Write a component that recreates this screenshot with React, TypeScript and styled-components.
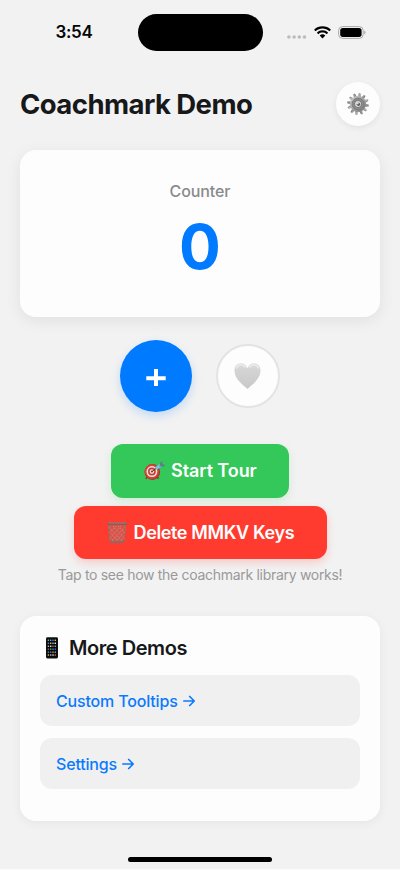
import React, { useState } from "react";
import styled, { createGlobalStyle } from "styled-components";

const GlobalStyle = createGlobalStyle`
  * { box-sizing: border-box; }
  body {
    margin: 0;
    background: #f2f2f2;
    font-family: Inter, "Liberation Sans", sans-serif;
    -webkit-font-smoothing: antialiased;
  }
  button { font-family: inherit; border: 0; padding: 0; cursor: pointer; }
  svg { display: block; flex: none; }
`;

const Screen = styled.div`
  width: 400px;
  height: 870px;
  overflow: hidden;
  display: flex;
  flex-direction: column;
  background: #f2f2f2;
  border-bottom: 1px solid #fbfbfb;
`;

const StatusBar = styled.div`
  height: 82px;
  flex: none;
  display: grid;
  grid-template-columns: 137.5px 125px 137.5px;
  align-items: start;
  padding-top: 14px;
`;

const Clock = styled.time`
  height: 37px;
  padding-left: 55.5px;
  font-size: 17px;
  font-weight: 600;
  line-height: 37px;
  letter-spacing: -0.35px;
  white-space: nowrap;
  color: #050505;
`;

const Island = styled.div`
  height: 36.5px;
  border-radius: 19px;
  background: #000;
`;

const StatusIcons = styled.div`
  height: 37px;
  display: flex;
  align-items: center;
  gap: 7px;
  padding-left: 24px;
`;

const Content = styled.main`
  display: flex;
  flex-direction: column;
  align-items: center;
  padding: 0 20px;
`;

const Header = styled.header`
  width: 100%;
  height: 44px;
  display: flex;
  align-items: center;
  justify-content: space-between;
`;

const Title = styled.h1`
  margin: 0;
  font-size: 27.5px;
  font-weight: 700;
  line-height: 34px;
  letter-spacing: -0.56px;
  white-space: nowrap;
  color: #17181a;
`;

const RoundButton = styled.button<{ $size: number; $tone: "plain" | "outline" | "primary" }>`
  width: ${(p) => p.$size}px;
  height: ${(p) => p.$size}px;
  flex: none;
  display: flex;
  align-items: center;
  justify-content: center;
  border-radius: 50%;
  color: #fff;
  background: ${(p) => (p.$tone === "primary" ? "#007aff" : "#fdfdfd")};
  border: ${(p) => (p.$tone === "outline" ? "2px solid #e3e3e4" : "0")};
  box-shadow: ${(p) =>
    p.$tone === "primary"
      ? "0 4px 10px rgba(0, 122, 255, 0.2)"
      : p.$tone === "plain"
        ? "0 2px 6px rgba(0, 0, 0, 0.07)"
        : "none"};
`;

const CounterCard = styled.section`
  width: 100%;
  height: 166.5px;
  margin-top: 24px;
  padding-top: 31px;
  display: flex;
  flex-direction: column;
  align-items: center;
  border-radius: 16px;
  background: #fdfdfd;
  box-shadow: 0 4px 16px rgba(0, 0, 0, 0.075);
`;

const CounterLabel = styled.div`
  font-size: 16px;
  font-weight: 500;
  line-height: 20px;
  letter-spacing: -0.1px;
  color: #8a8a8b;
`;

const CounterValue = styled.div`
  margin-top: 8px;
  font-size: 62px;
  font-weight: 700;
  line-height: 76px;
  color: #007aff;
`;

const Actions = styled.div`
  display: flex;
  align-items: center;
  gap: 24px;
  height: 72px;
  margin-top: 23.5px;
`;

const WideButton = styled.button<{ $width: number; $color: string; $shadow: string; $top: number; $tracking: number }>`
  width: ${(p) => p.$width}px;
  height: 53.5px;
  margin-top: ${(p) => p.$top}px;
  padding: 1px 0 0 32px;
  display: flex;
  align-items: center;
  gap: 6px;
  border-radius: 12px;
  background: ${(p) => p.$color};
  box-shadow: 0 4px 8px ${(p) => p.$shadow};
  font-size: 18px;
  font-weight: 600;
  line-height: 22px;
  letter-spacing: ${(p) => p.$tracking}px;
  white-space: nowrap;
  color: #fff;
`;

const Hint = styled.p`
  margin: 6px 0 0;
  font-size: 14px;
  line-height: 20px;
  letter-spacing: -0.3px;
  white-space: nowrap;
  color: #99999a;
`;

const DemosCard = styled.section`
  width: 100%;
  height: 205.5px;
  margin-top: 30.5px;
  padding: 20px;
  border-radius: 16px;
  background: #fdfdfd;
  box-shadow: 0 2px 12px rgba(0, 0, 0, 0.055);
`;

const DemosTitle = styled.h2`
  margin: 0 0 15.5px;
  height: 24px;
  display: flex;
  align-items: center;
  gap: 5px;
  padding-left: 4px;
  font-size: 20px;
  font-weight: 600;
  line-height: 24px;
  letter-spacing: -0.45px;
  color: #17181a;
`;

const DemoLink = styled.a`
  height: 51px;
  margin-bottom: 12px;
  padding: 0 16px;
  display: flex;
  align-items: center;
  gap: 5px;
  border-radius: 12px;
  background: #f0f0f0;
  font-size: 16px;
  font-weight: 550;
  letter-spacing: -0.17px;
  color: #0a7aff;
`;

const HomeIndicator = styled.div`
  width: 144px;
  height: 5px;
  flex: none;
  margin: 35.5px auto 0;
  border-radius: 3px;
  background: #000;
`;

const CellularDots = () => (
  <svg width="20" height="12" viewBox="0 0 20 12">
    {[1.9, 7.1, 12.3, 17.5].map((x) => (
      <circle key={x} cx={x} cy="10" r="1.8" fill="#bcbcbc" />
    ))}
  </svg>
);

const WifiIcon = () => (
  <svg width="17" height="13" viewBox="0 0 17 13">
    <path d="M8.5.3C5.3.3 2.4 1.5.3 3.500c-.2.2-.2.4 0 .6l1 1c.2.2.4.2.6 0C3.600 3.500 5.900 2.600 8.500 2.600s4.900.9 6.600 2.500c.2.2.4.2.6 0l1-1c.2-.2.2-.4 0-.6C14.600 1.500 11.700.3 8.500.3Z" />
    <path d="M8.500 4.300c-2.100 0-4 .8-5.400 2.100-.2.2-.2.4 0 .6l1 1c.2.2.4.2.6 0 1-.9 2.300-1.400 3.800-1.400s2.800.5 3.800 1.400c.2.2.4.2.6 0l1-1c.2-.2.2-.4 0-.6-1.400-1.300-3.300-2.100-5.400-2.100Z" />
    <path d="M8.500 8.300c-1 0-1.900.3-2.600.9-.2.200-.2.400 0 .6l2.300 2.400c.2.2.4.2.6 0l2.300-2.400c.2-.2.2-.4 0-.6-.7-.6-1.600-.9-2.600-.9Z" />
  </svg>
);

const BatteryIcon = () => (
  <svg width="28" height="13" viewBox="0 0 28 13">
    <rect x=".6" y=".6" width="24.600" height="11.800" rx="4" fill="none" stroke="#a9a9a9" />
    <rect x="2.200" y="2.100" width="21.400" height="8.800" rx="2.600" />
    <path d="M26.300 4.500c1.600.7 1.600 3.300 0 4Z" fill="#a0a0a0" />
  </svg>
);

const GearIcon = () => (
  <svg width="24" height="24" viewBox="-12 -12 24 24">
    <defs>
      <linearGradient id="gearRim" x1="0" y1="0" x2="1" y2="1">
        <stop offset="0" stopColor="#d2d2d2" />
        <stop offset=".5" stopColor="#a2a2a2" />
        <stop offset="1" stopColor="#777" />
      </linearGradient>
    </defs>
    {Array.from({ length: 12 }, (_, i) => (
      <g key={i} transform={`rotate(${i * 30 + 8})`}>
        <path d="M-1.400-7 L-1-10.600 Q0-11.400 1-10.600 L1.400-7Z" fill={i % 2 ? "#999" : "#b5b5b5"} />
        <path d="M.5-10.800 L1.400-7" stroke="#666" strokeWidth=".5" />
      </g>
    ))}
    <circle r="8" fill="url(#gearRim)" />
    <circle r="5.900" fill="#8b8b8b" stroke="#757575" strokeWidth=".8" />
    <circle r="3.500" fill="#e2e2e2" stroke="#666" strokeWidth=".8" />
    <circle r="1.700" cx=".4" cy=".3" fill="#4c565f" />
    <circle r=".9" cx="-.2" cy="-.5" fill="#c8e0ee" />
  </svg>
);

const PlusIcon = () => (
  <svg width="20" height="20" viewBox="0 0 20 20">
    <path d="M10 3v18M.3 12.200h19.400" stroke="#fff" strokeWidth="4" />
  </svg>
);

const HeartIcon = () => (
  <svg width="28" height="28" viewBox="0 0 28 28">
    <defs>
      <linearGradient id="heartFill" x1="0" y1="0" x2="0" y2="1">
        <stop offset="0" stopColor="#dfdfdf" />
        <stop offset=".25" stopColor="#d4d4d4" />
        <stop offset="1" stopColor="#c8c8c8" />
      </linearGradient>
    </defs>
    <path d="M13.500 27C10 23.500.500 17.500.500 8.500.500 4.200 3.300 1.200 6.800 1.200c3 0 5.500 1.900 6.700 5 1.200-3.100 3.700-5 6.700-5 3.500 0 6.300 3 6.300 7.300 0 9-9.500 15-13 18.500Z" fill="url(#heartFill)" />
    <path d="M2.500 6.500C3.500 2.300 9 1.500 11.500 5.500M15.500 5.500c2.500-4 8-3.200 9 1" fill="none" stroke="#ededed" strokeWidth="1.300" />
  </svg>
);

const TargetIcon = () => (
  <svg width="22" height="20" viewBox="-1 0 22 20">
    <path d="m3.500 15-1.500 3M13 15.500l1.500 2.300" stroke="#a83228" strokeWidth="1.600" />
    <ellipse cx="8.300" cy="11" rx="7.800" ry="7.900" fill="#9d352e" />
    <ellipse cx="7.900" cy="10.600" rx="7.200" ry="7.300" fill="#dc4338" />
    <ellipse cx="7.900" cy="10.600" rx="5.400" ry="5.500" fill="#efe6df" />
    <ellipse cx="7.900" cy="10.600" rx="3.900" ry="4" fill="#c63a32" />
    <ellipse cx="7.900" cy="10.600" rx="2.300" ry="2.400" fill="#f0dfd7" />
    <circle cx="7.900" cy="10.600" r="1" fill="#b22c25" />
    <path d="m8 10.500 4.500-3.300" stroke="#423f40" strokeWidth="1" />
    <path d="m12 7.500 5-3.400" stroke="#79c3e5" strokeWidth="3" />
    <path d="m15.500 5.200.8-3.700 2-1 .1 2.600 2.600 1-1.400 1.600Z" fill="#607e85" />
  </svg>
);

const TrashIcon = () => (
  <svg width="22" height="22" viewBox="0 0 22 22">
    <path d="M2.500 3 4 19q7 2 14 0L19.500 3Z" fill="#b5675e" fillOpacity=".5" />
    <path d="m3 5 13 14M3.500 10l9 9.500M4 15l4 4.500M7 4l11 12M12 4l6.500 7M19 5 6 19M18.500 10l-9 9.500M18 15l-4 4.500M15 4 4 16M10 4l-6.500 7" stroke="#c99b90" strokeWidth=".65" strokeDasharray="1.500 1" />
    <path d="M2.600 3 4 19M19.400 3 18 19" stroke="#8b7771" strokeWidth="1" />
    <path d="M4 18.500q7 1.300 14 0v1.800q-7 1.500-14 0Z" fill="#77736f" />
    <rect x="1.200" y=".8" width="19.600" height="2" rx=".8" fill="#696561" />
    <path d="M2 1.100h18" stroke="#a3a09c" strokeWidth=".6" />
  </svg>
);

const appColors = ["#51d26b", "#e9e9e9", "#f5b83c", "#3ba9f5", "#e35b42", "#b8bec4", "#4b83df"];

const PhoneIcon = () => (
  <svg width="20" height="22" viewBox="0 0 20 22">
    <rect x="2" y=".3" width="12" height="21.200" rx="1.400" fill="#111" />
    <rect x="3.200" y="1.900" width="9.600" height="18.200" fill="#06090e" />
    {Array.from({ length: 24 }, (_, i) => (
      <rect
        key={i}
        x={3.7 + (i % 4) * 2.3}
        y={2.6 + Math.floor(i / 4) * 2.95}
        width="1.400"
        height="1.400"
        rx=".3"
        fill={appColors[(i * 3 + Math.floor(i / 4)) % appColors.length]}
      />
    ))}
  </svg>
);

const ArrowIcon = () => (
  <svg width="12" height="12" viewBox="0 0 12 12" fill="none" stroke="currentColor" strokeWidth="1.700" strokeLinecap="round" strokeLinejoin="round">
    <path d="M.9 6h10M6.700 1.500 11.200 6l-4.500 4.500" />
  </svg>
);

export default function App() {
  const [count, setCount] = useState(0);

  return (
    <>
      <GlobalStyle />
      <Screen>
        <StatusBar>
          <Clock>3:54</Clock>
          <Island />
          <StatusIcons>
            <CellularDots />
            <WifiIcon />
            <BatteryIcon />
          </StatusIcons>
        </StatusBar>
        <Content>
          <Header>
            <Title>Coachmark Demo</Title>
            <RoundButton $size={44} $tone="plain" aria-label="Settings"><GearIcon /></RoundButton>
          </Header>
          <CounterCard>
            <CounterLabel>Counter</CounterLabel>
            <CounterValue>{count}</CounterValue>
          </CounterCard>
          <Actions>
            <RoundButton $size={72} $tone="primary" aria-label="Increase" onClick={() => setCount(count + 1)}><PlusIcon /></RoundButton>
            <RoundButton $size={64} $tone="outline" aria-label="Like"><HeartIcon /></RoundButton>
          </Actions>
          <WideButton $width={178} $top={32} $tracking={-0.08} $color="#34c759" $shadow="rgba(52, 199, 89, 0.17)">
            <TargetIcon />Start Tour
          </WideButton>
          <WideButton $width={253} $top={8} $tracking={-0.37} $color="#ff3b30" $shadow="rgba(255, 59, 48, 0.2)">
            <TrashIcon />Delete MMKV Keys
          </WideButton>
          <Hint>Tap to see how the coachmark library works!</Hint>
          <DemosCard>
            <DemosTitle><PhoneIcon />More Demos</DemosTitle>
            <DemoLink>Custom Tooltips <ArrowIcon /></DemoLink>
            <DemoLink>Settings <ArrowIcon /></DemoLink>
          </DemosCard>
        </Content>
        <HomeIndicator />
      </Screen>
    </>
  );
}
